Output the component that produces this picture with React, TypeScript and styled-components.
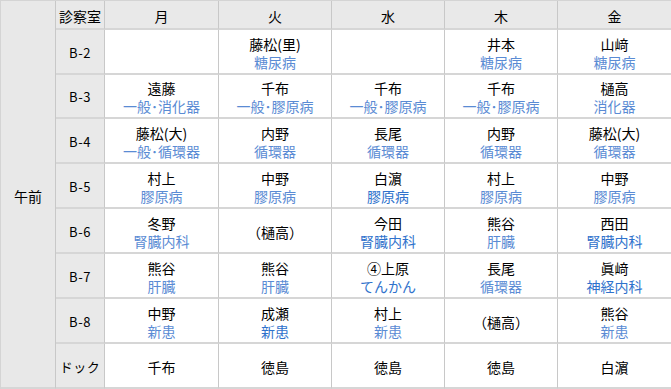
import { createGlobalStyle, styled } from "styled-components";
import { Fragment } from "react";

const GlobalStyle = createGlobalStyle`
    body {
        margin: 0;
        background: #ffffff;
        font-family: "Noto Sans CJK JP", "Noto Sans", sans-serif;
        color: #000000;
    }
`;

interface Entry {
    name: string;
    dept?: string;
    strong?: boolean;
}

interface Row {
    room: string;
    cells: (Entry | null)[];
}

const DAYS = ["月", "火", "水", "木", "金"];

const ROWS: Row[] = [
    { room: "B-2", cells: [null, { name: "藤松(里)", dept: "糖尿病" }, null, { name: "井本", dept: "糖尿病" }, { name: "山﨑", dept: "糖尿病" }] },
    { room: "B-3", cells: [{ name: "遠藤", dept: "一般･消化器" }, { name: "千布", dept: "一般･膠原病" }, { name: "千布", dept: "一般･膠原病" }, { name: "千布", dept: "一般･膠原病" }, { name: "樋高", dept: "消化器" }] },
    { room: "B-4", cells: [{ name: "藤松(大)", dept: "一般･循環器" }, { name: "内野", dept: "循環器" }, { name: "長尾", dept: "循環器" }, { name: "内野", dept: "循環器" }, { name: "藤松(大)", dept: "循環器" }] },
    { room: "B-5", cells: [{ name: "村上", dept: "膠原病" }, { name: "中野", dept: "膠原病" }, { name: "白濵", dept: "膠原病", strong: true }, { name: "村上", dept: "膠原病" }, { name: "中野", dept: "膠原病" }] },
    { room: "B-6", cells: [{ name: "冬野", dept: "腎臓内科" }, { name: "（樋高）" }, { name: "今田", dept: "腎臓内科", strong: true }, { name: "熊谷", dept: "肝臓" }, { name: "西田", dept: "腎臓内科", strong: true }] },
    { room: "B-7", cells: [{ name: "熊谷", dept: "肝臓" }, { name: "熊谷", dept: "肝臓" }, { name: "④上原", dept: "てんかん", strong: true }, { name: "長尾", dept: "循環器" }, { name: "眞﨑", dept: "神経内科", strong: true }] },
    { room: "B-8", cells: [{ name: "中野", dept: "新患" }, { name: "成瀬", dept: "新患", strong: true }, { name: "村上", dept: "新患" }, { name: "（樋高）" }, { name: "熊谷", dept: "新患" }] },
    { room: "ドック", cells: [{ name: "千布" }, { name: "徳島" }, { name: "徳島" }, { name: "徳島" }, { name: "白濵" }] },
];

const Schedule = styled.div`
    display: grid;
    grid-template-columns: 55px 49px 114px 113px 113px 113px 114px;
    grid-template-rows: 29px 45px 44px repeat(6, 45px);
    width: 671px;
    border-top: 1px solid #d4d4d4;
    border-left: 1px solid #d4d4d4;
    box-sizing: border-box;
`;

const Cell = styled.div<{ $head?: boolean }>`
    display: flex;
    flex-direction: column;
    align-items: center;
    justify-content: center;
    padding-top: 2px;
    background: ${(p) => (p.$head ? "#e9e9e9" : "#ffffff")};
    border-right: 1px solid #c8c8c8;
    border-bottom: 2px solid #d6d6d6;
    box-sizing: border-box;
    font-size: 14px;
    line-height: 18px;
    text-align: center;
    white-space: nowrap;
`;

const PeriodCell = styled(Cell)`
    grid-row: 1 / span 9;
    background: #e8e8e8;
    padding-top: 4px;
`;

const RoomLabel = styled.div`
    font-size: 13px;
    letter-spacing: 0.5px;
    height: 18px;
`;

const Name = styled.div`
    color: #000000;
    height: 18px;
`;

const Dept = styled.div<{ $strong?: boolean }>`
    color: ${(p) => (p.$strong ? "#2f72cc" : "#5a8bd4")};
    height: 18px;
`;

export default function App() {
    return (
        <>
            <GlobalStyle />
            <Schedule>
                <PeriodCell>午前</PeriodCell>
                <Cell $head>診察室</Cell>
                {DAYS.map((d) => (
                    <Cell $head key={d}>{d}</Cell>
                ))}
                {ROWS.map((row) => (
                    <Fragment key={row.room}>
                        <Cell $head>
                            <RoomLabel>{row.room}</RoomLabel>
                        </Cell>
                        {row.cells.map((c, i) => (
                            <Cell key={i}>
                                {c && <Name>{c.name}</Name>}
                                {c && c.dept && <Dept $strong={c.strong}>{c.dept}</Dept>}
                            </Cell>
                        ))}
                    </Fragment>
                ))}
            </Schedule>
        </>
    );
}
